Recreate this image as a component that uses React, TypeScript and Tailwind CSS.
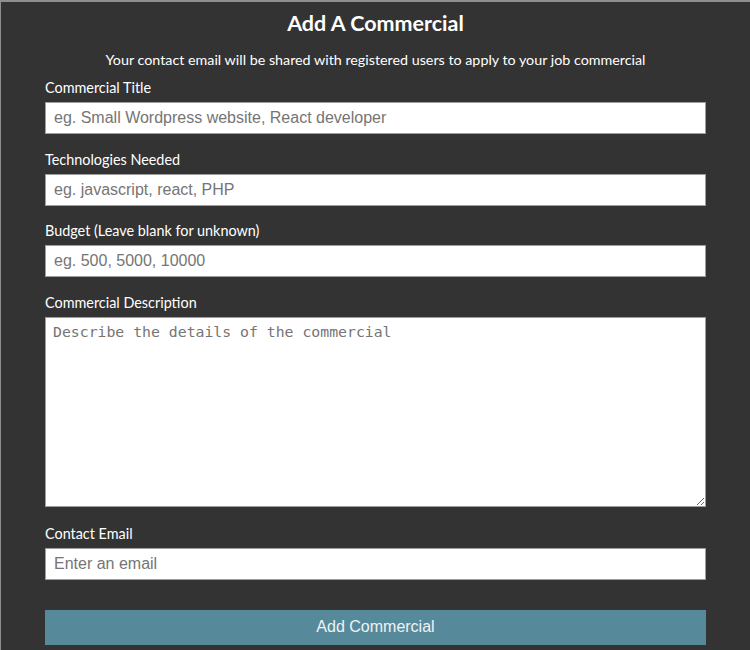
const fields = [
  { label: "Commercial Title", placeholder: "eg. Small Wordpress website, React developer" },
  { label: "Technologies Needed", placeholder: "eg. javascript, react, PHP" },
  { label: "Budget (Leave blank for unknown)", placeholder: "eg. 500, 5000, 10000" },
];

const inputClass =
  "w-full h-[32px] bg-white border border-[#9d9d9d] px-[8px] text-[16px] text-black outline-none placeholder:text-[#757575] font-['Liberation_Sans',Arial,sans-serif]";

const labelClass = "block text-[14.4px] leading-[19px] mb-[5px] text-white";

const App = () => {
  return (
    <div className="min-h-screen bg-[#333333] border-t-2 border-l border-[#8e8e8e] px-[44px] pt-[8px] pb-4 font-['Lato','Noto_Sans',sans-serif]">
      <h2 className="text-center text-[21.5px] leading-[26px] font-bold text-white">Add A Commercial</h2>
      <p className="mt-[15px] text-center text-[14.3px] leading-[18px] text-white">
        Your contact email will be shared with registered users to apply to your job commercial
      </p>

      <form className="mt-[9px] flex flex-col" onSubmit={(e) => e.preventDefault()}>
        {fields.map((f) => (
          <div key={f.label} className="mb-[15.5px]">
            <label className={labelClass}>{f.label}</label>
            <input type="text" className={inputClass} placeholder={f.placeholder} />
          </div>
        ))}

        <div className="mb-[17px]">
          <label className={labelClass}>Commercial Description</label>
          <textarea
            className="block w-full h-[190px] bg-white border border-[#9d9d9d] px-[7px] py-[4px] text-[14.8px] leading-[20px] text-black outline-none placeholder:text-[#757575] font-['DejaVu_Sans_Mono','Liberation_Mono',monospace]"
            placeholder="Describe the details of the commercial"
          />
        </div>

        <div>
          <label className={labelClass}>Contact Email</label>
          <input type="email" className={inputClass} placeholder="Enter an email" />
        </div>

        <button
          type="submit"
          className="mt-[30px] w-full h-[35px] bg-[#568a9b] text-[#eef3f5] text-[16px] font-['Liberation_Sans',Arial,sans-serif]"
        >
          Add Commercial
        </button>
      </form>
    </div>
  );
};

export default App;
